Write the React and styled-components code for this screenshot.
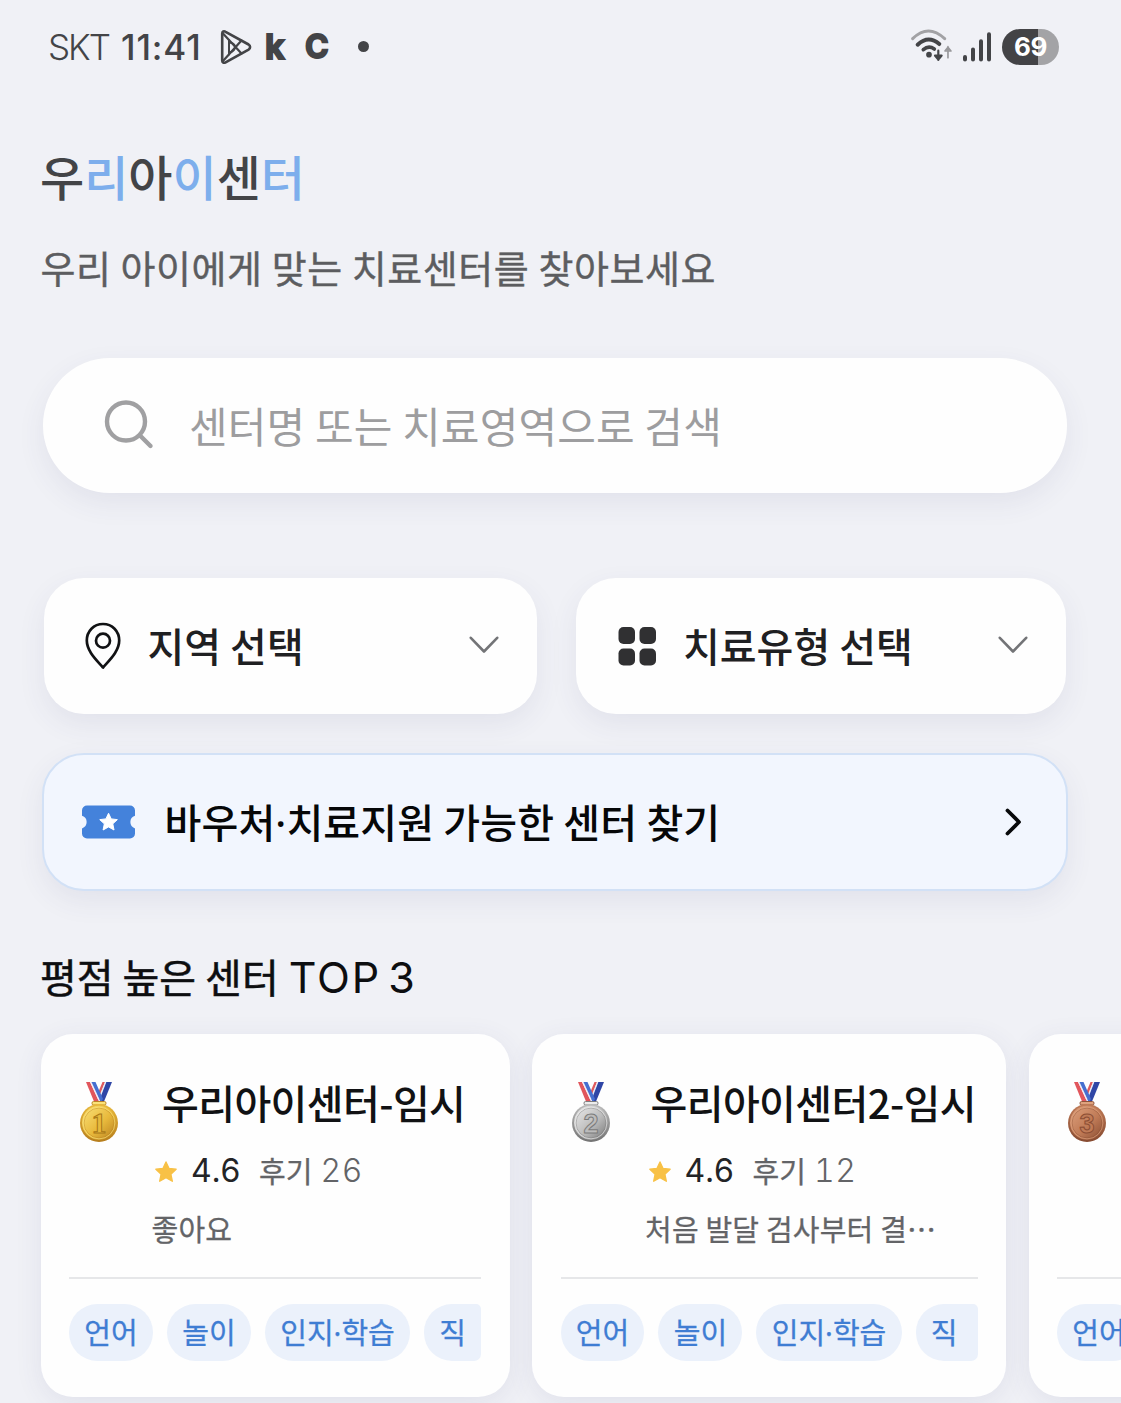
import React from "react";
import styled, { createGlobalStyle } from "styled-components";

const GlobalStyle = createGlobalStyle`
  * { box-sizing: border-box; }
  body { margin: 0; background: #f0f1f6; }
`;

const Screen = styled.main`
  width: 1121px;
  height: 1403px;
  overflow: hidden;
  background: #f0f1f6;
  font-family: "Noto Sans CJK KR", "Noto Sans", sans-serif;
  color: #111214;
`;

const StatusBar = styled.header`
  display: flex;
  align-items: center;
  justify-content: space-between;
  height: 93px;
  padding: 0 62px 0 48px;
`;

const StatusGroup = styled.div`
  display: flex;
  align-items: center;
`;

const StatusText = styled.span`
  font-family: "Inter", sans-serif;
  font-size: ${(p) => p.$size || 35}px;
  font-weight: ${(p) => p.$weight || 400};
  letter-spacing: ${(p) => p.$spacing || 0}px;
  line-height: 40px;
  width: ${(p) => p.$width}px;
  margin-left: ${(p) => p.$left || 0}px;
  white-space: nowrap;
  color: #434447;
`;

const RoundLetter = styled(StatusText)`
  -webkit-text-stroke: 1.8px #434447;
  stroke-linejoin: round;
`;

const Dot = styled.i`
  width: 11px;
  height: 11px;
  border-radius: 50%;
  background: #434447;
`;

const Battery = styled.div`
  display: flex;
  align-items: center;
  justify-content: center;
  width: 57px;
  height: 36px;
  border-radius: 18px;
  background: linear-gradient(90deg, #434346 0 62.5%, #a3a3a6 62.5%);
  color: #fff;
  font: 700 26px/36px "Inter", sans-serif;
  letter-spacing: -0.4px;
`;

const Intro = styled.section`
  padding: 53px 41px 0 40px;
`;

const Brand = styled.h1`
  margin: 0;
  font-size: 48px;
  font-weight: 500;
  line-height: 58px;
  color: #434447;
  span { color: #7daeec; }
`;

const Tagline = styled.p`
  margin: 38px 0 0 0.5px;
  font-size: 38px;
  line-height: 50px;
  letter-spacing: 0.55px;
  color: #5c5d60;
  -webkit-text-stroke: 0.4px #5c5d60;
  white-space: nowrap;
`;

const SearchBox = styled.label`
  display: flex;
  align-items: center;
  height: 135px;
  margin: 66px 54px 0 43px;
  padding-left: 61px;
  border-radius: 67px;
  background: #fefefe;
  box-shadow: 0 10px 28px rgba(70, 70, 120, 0.08);
`;

const Placeholder = styled.span`
  margin: 0 0 2px 34px;
  font-size: 42px;
  line-height: 60px;
  letter-spacing: 0.15px;
  color: #9d9d9f;
`;

const Filters = styled.div`
  display: grid;
  grid-template-columns: 493px 490px;
  gap: 39.5px;
  margin: 85px 0 0 43.5px;
`;

const Filter = styled.button`
  display: flex;
  align-items: center;
  height: 136px;
  padding: 0 38px 0 ${(p) => p.$left}px;
  border: 0;
  border-radius: 40px;
  background: #fefefe;
  box-shadow: 0 10px 28px rgba(70, 70, 120, 0.08);
  color: #1f2022;
  font: 500 40px/60px "Noto Sans CJK KR", sans-serif;
  text-align: left;
  svg { flex: none; }
`;

const FilterLabel = styled.span`
  flex: 1;
  margin: 0 0 3px 27px;
  white-space: nowrap;
`;

const Voucher = styled.a`
  display: flex;
  align-items: center;
  height: 138px;
  margin: 39px 53.5px 0 41.5px;
  padding: 0 44px 0 38px;
  border: 2px solid #d2e1f6;
  border-radius: 42px;
  background: #f2f6fe;
  box-shadow: 0 10px 28px rgba(70, 70, 120, 0.08);
  font-size: 40px;
  font-weight: 500;
  line-height: 60px;
  color: #060708;
`;

const VoucherLabel = styled.span`
  flex: 1;
  margin: 0 0 3px 30px;
  letter-spacing: 0.15px;
  white-space: nowrap;
`;

const MidDot = styled.span`
  font-family: "Noto Sans", sans-serif;
  line-height: 1;
`;

const Heading = styled.h2`
  display: flex;
  align-items: center;
  margin: 60px 0 0 40px;
  height: 50px;
  font-size: 40px;
  font-weight: 400;
  line-height: 50px;
  color: #0d0e10;
  -webkit-text-stroke: 0.5px #0d0e10;
  white-space: nowrap;
`;

const HeadingLatin = styled.span`
  margin: 2px 0 0 10px;
  font-family: "Inter", sans-serif;
  font-size: 43px;
  letter-spacing: 1.8px;
  word-spacing: -6.5px;
  -webkit-text-stroke: 0;
`;

const Rail = styled.div`
  display: flex;
  gap: 22.5px;
  margin: 33px 0 0 40.5px;
`;

const Card = styled.article`
  flex: none;
  width: ${(p) => p.$width}px;
  height: 363px;
  padding: 47px 28.5px 0;
  border-radius: 32px;
  background: #fefefe;
  box-shadow: 0 6px 28px rgba(70, 70, 120, 0.09);
`;

const CardTop = styled.div`
  display: flex;
  height: 196px;
  padding-left: 10px;
  svg { flex: none; }
`;

const CardBody = styled.div`
  margin-left: ${(p) => p.$left}px;
  white-space: nowrap;
`;

const Name = styled.h3`
  margin: 0 0 0 ${(p) => p.$indent}px;
  font-size: 40px;
  font-weight: 500;
  line-height: 42px;
  letter-spacing: -0.6px;
`;

const Rating = styled.div`
  display: flex;
  align-items: center;
  height: 36px;
  margin: 30px 0 0 4px;
`;

const Score = styled.span`
  width: 68px;
  margin-left: 14px;
  font: 400 32px/36px "Inter", sans-serif;
  letter-spacing: 0.8px;
  color: #232426;
`;

const Reviews = styled.span`
  margin-bottom: 2px;
  font-size: 29px;
  line-height: 36px;
  color: #636467;
  -webkit-text-stroke: 0.3px #636467;
`;

const Count = styled.span`
  margin-left: 8px;
  font: 350 32px/36px "Inter", sans-serif;
  font-variant-numeric: tabular-nums;
  letter-spacing: 0.6px;
  color: #636467;
`;

const Quote = styled.p`
  margin: 19px 0 0 0.5px;
  font-size: 29px;
  line-height: 40px;
  letter-spacing: 0.2px;
  color: #636467;
  -webkit-text-stroke: 0.3px #636467;
`;

const Chips = styled.div`
  display: flex;
  gap: 14px;
  padding-top: 25px;
  border-top: 2.5px solid #e6e7e9;
  overflow: hidden;
`;

const Chip = styled.span`
  flex: none;
  height: 57px;
  padding: 0 15.3px;
  border-radius: 28.5px;
  background: #ebf1fb;
  color: #3f7dd3;
  -webkit-text-stroke: 0.3px #3f7dd3;
  font-size: 29px;
  line-height: 54px;
  white-space: nowrap;
`;

const CutChip = styled(Chip)`
  flex: 1 0 0;
  padding-right: 0;
  border-radius: 28px 5px 7px 28px;
`;

const PlayIcon = () => (
  <svg width="32" height="36" viewBox="0 0 32 36" fill="none" stroke="#434447" strokeWidth="2.6" strokeLinejoin="round" strokeLinecap="round">
    <path d="M2.2 4.5v27c0 2 1.6 2.8 3.4 1.8l23-12.6c2-1.2 2-4 0-5.2L5.6 2.8C3.8 1.7 2.2 2.5 2.2 4.5Z" />
    <path d="M3 4.500 21.500 24.500M3 32 21.500 11.500" strokeWidth="2.2" />
    <path d="M9 11v14.500M9 13.500c3.500 0 6 2 6 4.500s-2.500 4.500-5 5.500" strokeWidth="2" />
  </svg>
);

const WifiIcon = () => (
  <svg width="43.3" height="36.7" viewBox="58 40 130 110" fill="none" strokeLinecap="round">
    <path d="M69 72Q116 26 165 72" stroke="#a2a2a5" strokeWidth="9" />
    <path d="M84 90Q116 60 149 88" stroke="#434447" strokeWidth="12" />
    <path d="M101 105Q117 91 134 103" stroke="#434447" strokeWidth="11" />
    <circle cx="118" cy="120" r="8.5" fill="#434447" />
    <path d="M146 108v28M136 123l10 12 10-12Z" stroke="#434447" strokeWidth="6.5" strokeLinejoin="round" />
    <path d="M175 129V96M166 109l9-11 9 11Z" stroke="#98989b" strokeWidth="5" strokeLinejoin="round" />
  </svg>
);

const SignalBars = styled.svg`
  margin: 0 10.5px 0 9px;
`;

const SignalIcon = () => (
  <SignalBars width="30" height="32" viewBox="0 0 30 32" fill="none" stroke="#434447" strokeWidth="4" strokeLinecap="round">
    <path d="M3 26V28.500M11 18.500v10M19 10.300v18.200M27 3.300v25.200" />
  </SignalBars>
);

const SearchIcon = () => (
  <svg width="51" height="51" viewBox="0 0 51 51" fill="none" stroke="#a0a0a2" strokeWidth="4.4" strokeLinecap="round">
    <circle cx="22" cy="21.5" r="19" />
    <path d="M36 35.500 46.500 46" />
  </svg>
);

const PinIcon = () => (
  <svg width="36" height="48" viewBox="0 0 36 48" fill="none" stroke="#111214" strokeWidth="2.7" strokeLinejoin="round">
    <path d="M18 45.500C12 38.500 1.800 29.500 1.800 18.600 1.800 9 8.800 2 18 2s16.200 7 16.200 16.600C34.200 29.500 24 38.500 18 45.500Z" />
    <circle cx="18" cy="18.700" r="7" />
  </svg>
);

const GridIcon = () => (
  <svg width="38" height="39" viewBox="0 0 38 39" fill="#303032">
    <rect x="0.5" y="0" width="16.5" height="17" rx="5" />
    <rect x="21.5" y="0" width="16.5" height="17" rx="5" />
    <rect x="0.5" y="21.500" width="16.5" height="17" rx="5" />
    <rect x="21.5" y="21.500" width="16.5" height="17" rx="5" />
  </svg>
);

const Chevron = styled.svg`
  margin-bottom: 2px;
`;

const ChevronDown = () => (
  <Chevron width="30" height="18" viewBox="0 0 30 18" fill="none" stroke="#737477" strokeWidth="2.6" strokeLinecap="round" strokeLinejoin="round">
    <path d="M1.800 1.800 15 15.500 28.200 1.800" />
  </Chevron>
);

const ChevronRight = () => (
  <svg width="17" height="28" viewBox="0 0 17 28" fill="none" stroke="#08090b" strokeWidth="3.8" strokeLinecap="round" strokeLinejoin="round">
    <path d="M2.500 2.500 14 14 2.500 25.500" />
  </svg>
);

const STAR = "M12 1.500 15.200 8.300 22.600 9.200 17.100 14.300 18.600 21.700 12 18 5.400 21.700 6.900 14.300 1.400 9.200 8.800 8.300Z";

const TicketIcon = () => (
  <svg width="53" height="34" viewBox="0 0 53 34">
    <path fill="#4482db" d="M5 .5h43a5 5 0 0 1 5 5v5.300a6.600 6.600 0 0 0 0 12.600v5.100a5 5 0 0 1-5 5H5a5 5 0 0 1-5-5v-5.100a6.600 6.600 0 0 0 0-12.600V5.500a5 5 0 0 1 5-5Z" />
    <path d={STAR} transform="translate(16.600 7) scale(.83)" fill="#fff" stroke="#fff" strokeWidth="1.200" strokeLinejoin="round" />
  </svg>
);

const StarIcon = () => (
  <svg width="22" height="24" viewBox="0.5 -1.5 23 25">
    <path d={STAR} fill="#f8c146" stroke="#f8c146" strokeWidth="1.400" strokeLinejoin="round" />
  </svg>
);

const METALS = {
  1: { light: "#fbe27a", mid: "#e8b93c", dark: "#b67d1c", ink: "#a87717" },
  2: { light: "#ececec", mid: "#bcbcbc", dark: "#737373", ink: "#7b7b7b" },
  3: { light: "#dfa27e", mid: "#c07b57", dark: "#864a30", ink: "#8b4d34" },
};

const Medal = ({ rank }) => {
  const m = METALS[rank];
  return (
    <svg width="40" height="63" viewBox="0 0 40 63">
      <defs>
        <linearGradient id={`face${rank}`} x1="0" y1="0" x2="1" y2="1">
          <stop offset="0" stopColor={m.light} />
          <stop offset=".55" stopColor={m.mid} />
          <stop offset="1" stopColor={m.dark} />
        </linearGradient>
        <linearGradient id={`rim${rank}`} x1="0" y1="0" x2="0" y2="1">
          <stop offset="0" stopColor={m.mid} />
          <stop offset="1" stopColor={m.dark} />
        </linearGradient>
      </defs>
      <path d="M27 1H33L25 20.500H19Z" fill="#2f46a6" />
      <path d="M23.500 1H26L20 17 18.500 13Z" fill="#df5b5e" />
      <path d="M26 1h1.300L20.500 19 19.500 17Z" fill="#e8ecf8" />
      <path d="M7 1h4l9 19.500h-5Z" fill="#e1565c" />
      <path d="M11 1h1.500l9 19.500H20Z" fill="#f1eef6" />
      <path d="M12.500 1H16.500L24 18l-1.500 2.500h-1Z" fill="#456fd0" />
      <rect x="13" y="20.500" width="14" height="3.500" rx="1.500" fill={m.light} stroke={m.dark} strokeWidth=".9" />
      <circle cx="20" cy="42" r="19" fill={`url(#rim${rank})`} />
      <circle cx="20" cy="41.800" r="17" fill={`url(#face${rank})`} />
      <circle cx="20" cy="42" r="15" fill="none" stroke={m.dark} strokeOpacity=".5" strokeWidth=".8" />
      <circle cx="20" cy="42" r="15.900" fill="none" stroke={m.light} strokeOpacity=".8" strokeWidth=".8" />
      <text
        x="20"
        y="52"
        textAnchor="middle"
        fontFamily={rank === 1 ? "Liberation Serif, serif" : "Liberation Sans, sans-serif"}
        fontWeight="700"
        fontSize={rank === 1 ? 30 : 27}
        fill={m.mid}
        stroke={m.ink}
        strokeWidth="1"
      >
        {rank}
      </text>
    </svg>
  );
};

const withMidDot = (label) =>
  label.split("·").map((part, i) => (
    <React.Fragment key={part}>
      {i > 0 && <MidDot>·</MidDot>}
      {part}
    </React.Fragment>
  ));

const TAGS = ["언어", "놀이", "인지·학습"];

const CENTERS = [
  { rank: 1, width: 469, left: 32, indent: 11, name: "우리아이센터-임시", score: "4.6", count: "26", quote: "좋아요" },
  { rank: 2, width: 474, left: 34, indent: 6, name: "우리아이센터2-임시", score: "4.6", count: "12", quote: "처음 발달 검사부터 결⋯" },
  { rank: 3, width: 474 },
];

const CenterCard = ({ center }) => (
  <Card $width={center.width}>
    <CardTop>
      <Medal rank={center.rank} />
      {center.name && (
        <CardBody $left={center.left}>
          <Name $indent={center.indent}>{center.name}</Name>
          <Rating>
            <StarIcon />
            <Score>{center.score}</Score>
            <Reviews>후기</Reviews>
            <Count>{center.count}</Count>
          </Rating>
          <Quote>{center.quote}</Quote>
        </CardBody>
      )}
    </CardTop>
    <Chips>
      {(center.name ? TAGS : TAGS.slice(0, 1)).map((tag) => <Chip key={tag}>{withMidDot(tag)}</Chip>)}
      {center.name && <CutChip>직</CutChip>}
    </Chips>
  </Card>
);

export default function App() {
  return (
    <>
      <GlobalStyle />
      <Screen>
        <StatusBar>
          <StatusGroup>
            <StatusText $weight={300} $width={73} $spacing={-2}>SKT</StatusText>
            <StatusText $weight={500} $width={99} $spacing={0.9}>11:41</StatusText>
            <PlayIcon />
            <RoundLetter $weight={700} $size={34} $width={40} $left={13}>k</RoundLetter>
            <RoundLetter $weight={700} $size={32} $width={53}>C</RoundLetter>
            <Dot />
          </StatusGroup>
          <StatusGroup>
            <WifiIcon />
            <SignalIcon />
            <Battery>69</Battery>
          </StatusGroup>
        </StatusBar>

        <Intro>
          <Brand>우<span>리</span>아<span>이</span>센<span>터</span></Brand>
          <Tagline>우리 아이에게 맞는 치료센터를 찾아보세요</Tagline>
        </Intro>

        <SearchBox>
          <SearchIcon />
          <Placeholder>센터명 또는 치료영역으로 검색</Placeholder>
        </SearchBox>

        <Filters>
          <Filter $left={41}>
            <PinIcon />
            <FilterLabel>지역 선택</FilterLabel>
            <ChevronDown />
          </Filter>
          <Filter $left={42}>
            <GridIcon />
            <FilterLabel>치료유형 선택</FilterLabel>
            <ChevronDown />
          </Filter>
        </Filters>

        <Voucher>
          <TicketIcon />
          <VoucherLabel>{withMidDot("바우처·치료지원 가능한 센터 찾기")}</VoucherLabel>
          <ChevronRight />
        </Voucher>

        <Heading>평점 높은 센터<HeadingLatin>TOP 3</HeadingLatin></Heading>

        <Rail>
          {CENTERS.map((center) => <CenterCard key={center.rank} center={center} />)}
        </Rail>
      </Screen>
    </>
  );
}
